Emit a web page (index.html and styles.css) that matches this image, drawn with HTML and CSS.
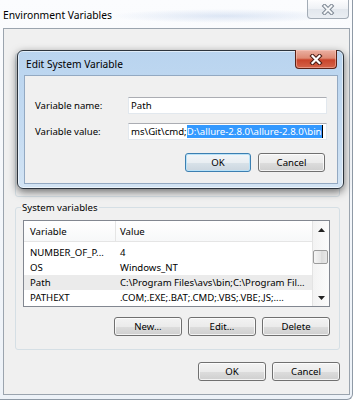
FILE: index.html
```html
<!DOCTYPE html>
<html>
  <head>
    <title>Environment Variables</title>
    <link rel="stylesheet" href="styles.css">
  </head>
  <body>
    <div class="window">
      <div class="titlebar">
        <span class="caption">Environment Variables</span>
        <button class="close inactive">
          <svg width="14" height="11" viewBox="0 0 14 11">
            <path d="M3.5 2 L10.5 9 M10.5 2 L3.5 9" stroke="#7d8793" stroke-width="4" stroke-linecap="square" fill="none"/>
            <path d="M3.5 2 L10.5 9 M10.5 2 L3.5 9" stroke="#f4f6f8" stroke-width="2" stroke-linecap="square" fill="none"/>
          </svg>
        </button>
      </div>

      <div class="client">
        <fieldset class="group user-group">
          <legend>User variables for Administrator</legend>
        </fieldset>

        <fieldset class="group system-group">
          <legend>System variables</legend>
          <div class="listview">
            <div class="lv-body">
              <div class="lv-header">
                <span class="col-name">Variable</span>
                <span class="col-value">Value</span>
              </div>
              <div class="lv-row">
                <span class="col-name">NUMBER_OF_P...</span>
                <span class="col-value">4</span>
              </div>
              <div class="lv-row">
                <span class="col-name">OS</span>
                <span class="col-value">Windows_NT</span>
              </div>
              <div class="lv-row selected">
                <span class="col-name">Path</span>
                <span class="col-value">C:\Program Files\avs\bin;C:\Program Fil...</span>
              </div>
              <div class="lv-row">
                <span class="col-name">PATHEXT</span>
                <span class="col-value">.COM;.EXE;.BAT;.CMD;.VBS;.VBE;.JS;....</span>
              </div>
            </div>
            <div class="scrollbar">
              <div class="sb-arrow">
                <svg width="7" height="4" viewBox="0 0 7 4"><path d="M0 4 L3.5 0 L7 4 Z" fill="#222"/></svg>
              </div>
              <div class="sb-track"><div class="sb-thumb"></div></div>
              <div class="sb-arrow">
                <svg width="7" height="4" viewBox="0 0 7 4"><path d="M0 0 L3.5 4 L7 0 Z" fill="#222"/></svg>
              </div>
            </div>
          </div>
          <div class="button-row">
            <button class="btn">New...</button>
            <button class="btn">Edit...</button>
            <button class="btn">Delete</button>
          </div>
        </fieldset>

        <div class="button-row window-actions">
          <button class="btn">OK</button>
          <button class="btn">Cancel</button>
        </div>
      </div>

      <div class="dialog">
        <div class="dlg-titlebar">
          <span class="dlg-title">Edit System Variable</span>
          <button class="close active">
            <svg width="14" height="11" viewBox="0 0 14 11">
              <path d="M3.5 2 L10.5 9 M10.5 2 L3.5 9" stroke="#4a1c14" stroke-width="4.2" stroke-linecap="square" fill="none"/>
              <path d="M3.5 2 L10.5 9 M10.5 2 L3.5 9" stroke="#ffffff" stroke-width="2.2" stroke-linecap="square" fill="none"/>
            </svg>
          </button>
        </div>
        <div class="dlg-client">
          <div class="field-grid">
            <label>Variable name:</label>
            <div class="textbox">Path</div>
            <label>Variable value:</label>
            <div class="textbox">ms\Git\cmd;<span class="selection">D:\allure-2.8.0\allure-2.8.0\bin</span><span class="caret"></span></div>
          </div>
          <div class="button-row dialog-actions">
            <button class="btn default">OK</button>
            <button class="btn wide">Cancel</button>
          </div>
        </div>
      </div>
    </div>
  </body>
</html>
```

FILE: styles.css
```css
body {
  margin: 0;
  font-family: "Noto Sans", "Segoe UI", sans-serif;
  font-size: 9.6px;
  color: #000;
  background: #fff;
}

.window {
  position: relative;
  box-sizing: border-box;
  width: 353px;
  height: 400px;
  padding: 0 3px 4px 3px;
  border-right: 1px solid #8f9aa6;
  border-bottom: 1px solid #8f9aa6;
  border-bottom-right-radius: 6px;
  background:
    radial-gradient(ellipse 115px 7px at 225px 16px, rgba(110, 150, 210, 0.22), transparent),
    linear-gradient(#fbfcfe, #edf2f8);
}

.titlebar {
  display: flex;
  justify-content: space-between;
  align-items: flex-start;
  height: 28px;
}
.caption {
  margin-top: 7px;
  font-size: 10.3px;
  line-height: 16px;
  text-shadow: 0 0 6px #fff;
}

.close {
  display: flex;
  align-items: center;
  justify-content: center;
  box-sizing: border-box;
  width: 42px;
  height: 19px;
  padding: 0;
  border-top: none;
  border-radius: 0 0 4px 4px;
}
.close.inactive {
  border: 1px solid #a3acb6;
  border-top: none;
  background: linear-gradient(#fdfdfe, #eef1f5 50%, #e2e7ed 51%, #eaeef3);
}
.close.active {
  margin-top: -1px;
  margin-right: 1px;
  border: 1px solid #5a2217;
  border-top: none;
  background: linear-gradient(#eab0a2, #de8a74 45%, #c9442b 55%, #d4644a);
  box-shadow: inset 0 0 0 1px rgba(255, 210, 200, 0.45);
}

.client {
  box-sizing: border-box;
  width: 347px;
  height: 367px;
  border: 1px solid #9ba4ae;
  background: #f0f0f0;
  display: flex;
  flex-direction: column;
}

.group {
  box-sizing: border-box;
  min-width: 0;
  margin: 0 9px 0 11px;
  padding: 0;
  border: 1px solid #d5dfe5;
  border-radius: 3px;
}
.group legend {
  margin-left: -2px;
  padding: 0 1px;
  line-height: 15px;
}
.user-group {
  margin-top: 17px;
  height: 151px;
  padding-left: 7px;
}
.user-group legend {
  color: #555;
}
.system-group {
  margin-top: 3px;
  height: 150px;
  padding: 5px 9px 13px 7px;
}

.listview {
  display: flex;
  box-sizing: border-box;
  height: 87px;
  border: 1px solid #828790;
  background: #fff;
}
.lv-body {
  flex: 1;
  min-width: 0;
}
.lv-header {
  display: flex;
  box-sizing: border-box;
  height: 21px;
  padding-top: 2px;
  line-height: 18px;
  margin-bottom: 3px;
  border-bottom: 1px solid #e5e5e5;
  background: linear-gradient(#ffffff, #f7f8f9);
}
.lv-row {
  display: flex;
  height: 15px;
  line-height: 15px;
}
.lv-row.selected {
  background: #ebebeb;
}
.col-name {
  flex-shrink: 0;
  box-sizing: border-box;
  width: 92px;
  padding-left: 6px;
  white-space: nowrap;
  overflow: hidden;
}
.lv-header .col-name {
  margin-top: -2px;
  padding-top: 2px;
  border-right: 1px solid #e5e5e5;
}
.col-value {
  padding-left: 4px;
  white-space: nowrap;
  overflow: hidden;
}

.scrollbar {
  display: flex;
  flex-direction: column;
  width: 17px;
  flex-shrink: 0;
  box-sizing: border-box;
  border-left: 1px solid #e3e3e3;
  background: linear-gradient(to right, #f3f3f3, #fbfbfb);
}
.sb-arrow {
  display: flex;
  align-items: center;
  justify-content: center;
  height: 17px;
}
.sb-track {
  flex: 1;
}
.sb-thumb {
  box-sizing: border-box;
  width: 15px;
  height: 14px;
  margin-top: 12px;
  border: 1px solid #9b9b9b;
  border-radius: 2px;
  background: linear-gradient(to right, #f5f5f5, #e6e6e6 50%, #dadada 51%, #e8e8e8);
}

.button-row {
  display: flex;
  justify-content: flex-end;
  gap: 6px;
}
.system-group .button-row {
  margin-top: 10px;
}
.window-actions {
  margin: 12px 9px 0 0;
}

.btn {
  box-sizing: border-box;
  width: 68px;
  height: 19px;
  padding: 0;
  border: 1px solid #707070;
  border-radius: 3px;
  font-family: inherit;
  font-size: 9.6px;
  line-height: 16px;
  color: #000;
  background: linear-gradient(#f3f3f3, #ebebeb 50%, #dddddd 51%, #cfcfcf);
  box-shadow: inset 0 0 0 1px rgba(255, 255, 255, 0.75);
}
.btn.default {
  border-color: #3c7fb1;
  background: linear-gradient(#f2f6f9, #e9eef2 50%, #d9e2e9 51%, #cbd6df);
  box-shadow: inset 0 0 0 1px #b9e2f8;
}

.dialog {
  position: absolute;
  left: 17px;
  top: 50px;
  box-sizing: border-box;
  width: 327px;
  height: 139px;
  padding: 0 5px 4px 6px;
  display: flex;
  flex-direction: column;
  border: 1px solid #2c343d;
  border-radius: 6px;
  background: linear-gradient(#b9d4ef, #c6dcf2 60%, #d3e4f4);
  box-shadow: 0 3px 9px rgba(0, 0, 0, 0.55), inset 0 0 0 1px rgba(255, 255, 255, 0.55);
}
.dlg-titlebar {
  display: flex;
  justify-content: space-between;
  align-items: flex-start;
  flex-shrink: 0;
  height: 24px;
}
.dlg-title {
  margin-top: 5px;
  padding-left: 2px;
  font-size: 10.2px;
  line-height: 16px;
}
.dlg-client {
  flex: 1;
  padding: 21px 10px 0 10px;
  border: 1px solid #93a9c2;
  background: #f0f0f0;
}
.field-grid {
  display: grid;
  grid-template-columns: 93px 1fr;
  row-gap: 9px;
  align-items: center;
}
.textbox {
  box-sizing: border-box;
  height: 17px;
  padding-left: 2px;
  border: 1px solid #e2e8ee;
  border-top-color: #abadb3;
  background: #fff;
  line-height: 15px;
  white-space: nowrap;
  overflow: hidden;
}
.selection {
  background: #3399ff;
  color: #fff;
}
.caret {
  display: inline-block;
  width: 1px;
  height: 13px;
  vertical-align: -3px;
  background: #000;
}
.dialog-actions {
  margin-top: 13px;
  padding-right: 2px;
  gap: 7px;
}
.dialog-actions .btn {
  width: 66px;
}
.dialog-actions .btn.wide {
  width: 67px;
}
```
